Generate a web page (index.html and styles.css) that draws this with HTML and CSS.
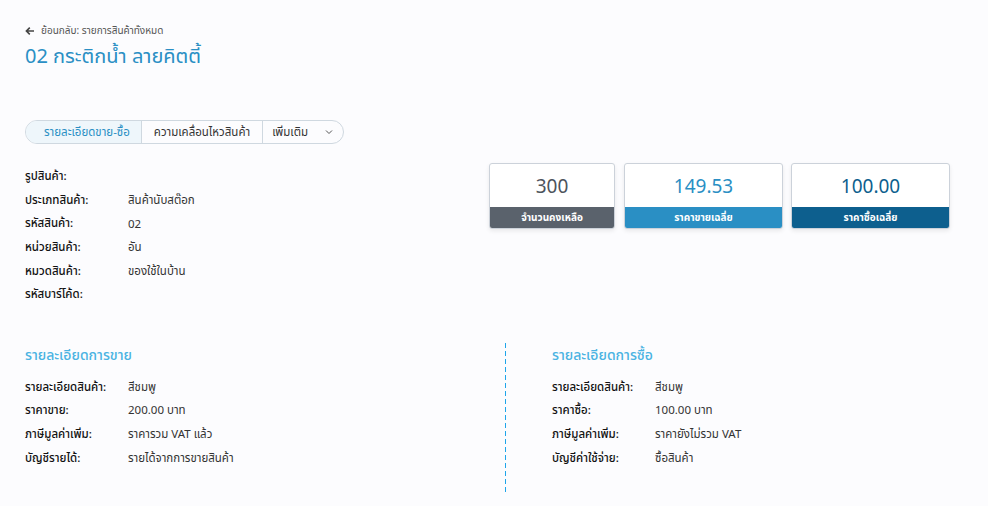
FILE: index.html
```html
<!DOCTYPE html>
<html lang="th">
<head>
    <meta charset="UTF-8">
    <title>02 กระติกน้ำ ลายคิตตี้</title>
    <link rel="stylesheet" href="styles.css">
</head>
<body>
    <div class="page">
        <a class="back" href="#">
            <svg width="10" height="10" viewBox="0 0 10 10"><path d="M9 5H1.5M4.8 1.6L1.4 5l3.4 3.4" fill="none" stroke="#444" stroke-width="1.6"/></svg>
            ย้อนกลับ: รายการสินค้าทั้งหมด
        </a>
        <h1 class="title">02 กระติกน้ำ ลายคิตตี้</h1>

        <div class="tabs">
            <div class="tab active">รายละเอียดขาย-ซื้อ</div>
            <div class="tab">ความเคลื่อนไหวสินค้า</div>
            <div class="tab more">เพิ่มเติม
                <svg width="8" height="6" viewBox="0 0 8 6"><path d="M1 1.5l3 3 3-3" fill="none" stroke="#555" stroke-width="1"/></svg>
            </div>
        </div>

        <div class="overview">
            <div class="info">
                <div class="row"><span class="label">รูปสินค้า:</span><span class="value"></span></div>
                <div class="row"><span class="label">ประเภทสินค้า:</span><span class="value">สินค้านับสต๊อก</span></div>
                <div class="row"><span class="label">รหัสสินค้า:</span><span class="value">02</span></div>
                <div class="row"><span class="label">หน่วยสินค้า:</span><span class="value">อัน</span></div>
                <div class="row"><span class="label">หมวดสินค้า:</span><span class="value">ของใช้ในบ้าน</span></div>
                <div class="row"><span class="label">รหัสบาร์โค้ด:</span><span class="value"></span></div>
            </div>
            <div class="stats">
                <div class="stat grey">
                    <div class="num">300</div>
                    <div class="cap">จำนวนคงเหลือ</div>
                </div>
                <div class="stat blue">
                    <div class="num">149.53</div>
                    <div class="cap">ราคาขายเฉลี่ย</div>
                </div>
                <div class="stat dark">
                    <div class="num">100.00</div>
                    <div class="cap">ราคาซื้อเฉลี่ย</div>
                </div>
            </div>
        </div>

        <div class="details">
            <div class="section sell">
                <h2>รายละเอียดการขาย</h2>
                <div class="row"><span class="label">รายละเอียดสินค้า:</span><span class="value">สีชมพู</span></div>
                <div class="row"><span class="label">ราคาขาย:</span><span class="value">200.00 บาท</span></div>
                <div class="row"><span class="label">ภาษีมูลค่าเพิ่ม:</span><span class="value">ราคารวม VAT แล้ว</span></div>
                <div class="row"><span class="label">บัญชีรายได้:</span><span class="value">รายได้จากการขายสินค้า</span></div>
            </div>
            <div class="divider"></div>
            <div class="section buy">
                <h2>รายละเอียดการซื้อ</h2>
                <div class="row"><span class="label">รายละเอียดสินค้า:</span><span class="value">สีชมพู</span></div>
                <div class="row"><span class="label">ราคาซื้อ:</span><span class="value">100.00 บาท</span></div>
                <div class="row"><span class="label">ภาษีมูลค่าเพิ่ม:</span><span class="value">ราคายังไม่รวม VAT</span></div>
                <div class="row"><span class="label">บัญชีค่าใช้จ่าย:</span><span class="value">ซื้อสินค้า</span></div>
            </div>
        </div>
    </div>
</body>
</html>
```

FILE: styles.css
```css
body {
    margin: 0;
    background-color: #fcfcfe;
    font-family: "Noto Sans", "Noto Sans Thai", "Liberation Sans", sans-serif;
    color: #222;
}
.page {
    padding: 24px 25px 0 25px;
}
.back {
    display: flex;
    align-items: center;
    gap: 6px;
    font-size: 10px;
    color: #555;
    text-decoration: none;
    height: 14px;
}
.title {
    margin: 4px 0 0 0;
    font-size: 20px;
    font-weight: normal;
    color: #2a8fc4;
    line-height: 28px;
}
.tabs {
    display: inline-flex;
    margin-top: 50px;
    border: 1px solid #cfd8e0;
    border-radius: 12px;
    height: 22px;
    overflow: hidden;
}
.tab {
    display: flex;
    align-items: center;
    padding: 0 12px;
    font-size: 11.5px;
    color: #333;
    border-left: 1px solid #cfd8e0;
}
.tab.active {
    border-left: none;
    padding: 0 11px 0 18px;
    background-color: #eef6fb;
    color: #2a8fc4;
}
.tab.more {
    gap: 17px;
    padding: 0 10px 0 9px;
}
.overview {
    display: flex;
    align-items: flex-start;
    justify-content: space-between;
    margin-top: 18px;
}
.info {
    padding-top: 3px;
}
.row {
    display: flex;
    height: 23.6px;
    align-items: center;
    font-size: 11.5px;
}
.label {
    width: 103px;
    color: #111;
    font-weight: 500;
}
.value {
    color: #333;
}
.stats {
    display: flex;
    margin: 1px 13px 0 0;
}
.stat {
    box-sizing: border-box;
    display: flex;
    flex-direction: column;
    border: 1px solid #ccd2da;
    border-radius: 3px;
    background: #fff;
    overflow: hidden;
    box-shadow: 0 2px 4px rgba(0, 0, 0, 0.08);
}
.stat.grey { width: 126px; margin-right: 9px; }
.stat.blue { width: 159px; margin-right: 8px; }
.stat.dark { width: 159px; }
.num {
    height: 43px;
    display: flex;
    align-items: center;
    justify-content: center;
    font-size: 19px;
}
.cap {
    height: 21px;
    display: flex;
    align-items: center;
    justify-content: center;
    color: #fff;
    font-size: 10px;
    font-weight: bold;
}
.grey .num { color: #4d545c; }
.grey .cap { background-color: #5a626c; }
.blue .num { color: #2a8fc4; }
.blue .cap { background-color: #2a8fc4; }
.dark .num { color: #0d5f8e; }
.dark .cap { background-color: #0d5f8e; }
.details {
    display: flex;
    margin-top: 36px;
}
.section {
    padding-top: 2px;
}
.section.sell {
    width: 480px;
}
.section.buy {
    padding-left: 46px;
}
.section h2 {
    margin: 0 0 11px 0;
    font-size: 14px;
    font-weight: 500;
    color: #4ab3e2;
    line-height: 20px;
}
.divider {
    width: 1px;
    height: 152px;
    background: repeating-linear-gradient(to bottom, #1fa5ea 0 5px, transparent 5px 8px);
}
```
